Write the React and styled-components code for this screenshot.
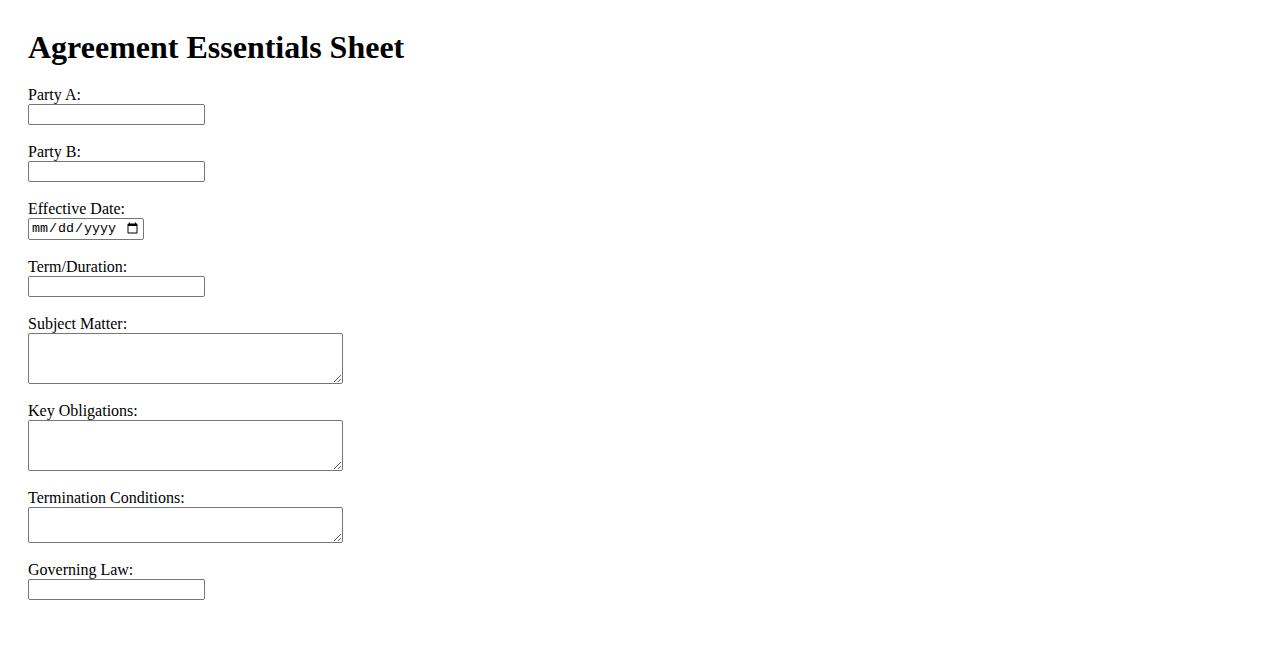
import React from "react";
import styled, { createGlobalStyle } from "styled-components";

const GlobalStyle = createGlobalStyle`
  html, body {
    background: #ffffff;
  }
  body {
    margin: 8px;
    font-family: "Liberation Serif", "Times New Roman", serif;
    font-size: 16px;
    color: #000000;
  }
`;

const Page = styled.main`
  padding: 21px 20px 20px;
`;

const Title = styled.h1`
  margin: 0 0 20px;
  font-size: 32px;
  font-weight: bold;
  line-height: normal;
`;

const Form = styled.form`
  display: flex;
  flex-direction: column;
  align-items: flex-start;
  gap: 18px;
`;

const Field = styled.div`
  display: flex;
  flex-direction: column;
  align-items: flex-start;
`;

const Label = styled.label`
  display: block;
  line-height: 18px;
  font-size: 16px;
`;

const controlBase = `
  box-sizing: border-box;
  margin: 0;
  border: 1px solid #767676;
  border-radius: 2px;
  background: #ffffff;
  color: #000000;
  font-size: 13.333px;
`;

const TextInput = styled.input`
  ${controlBase}
  width: 177px;
  height: 21px;
  padding: 1px 2px;
  font-family: "Liberation Sans", Arial, sans-serif;
`;

const DateInput = styled.input`
  ${controlBase}
  width: 116px;
  height: 22px;
  padding: 1px 2px;
  font-family: "Liberation Mono", "Courier New", monospace;
`;

const TextArea = styled.textarea`
  ${controlBase}
  width: 315px;
  height: ${(p) => (p.$rows === 2 ? 36 : 51)}px;
  padding: 2px;
  font-family: "Liberation Mono", "Courier New", monospace;
  resize: both;
`;

const fields = [
  { id: "partyA", label: "Party A:", kind: "text" },
  { id: "partyB", label: "Party B:", kind: "text" },
  { id: "effectiveDate", label: "Effective Date:", kind: "date" },
  { id: "term", label: "Term/Duration:", kind: "text" },
  { id: "subject", label: "Subject Matter:", kind: "area", rows: 3 },
  { id: "obligations", label: "Key Obligations:", kind: "area", rows: 3 },
  { id: "termination", label: "Termination Conditions:", kind: "area", rows: 2 },
  { id: "law", label: "Governing Law:", kind: "text" },
];

export default function App() {
  return (
    <>
      <GlobalStyle />
      <Page>
        <Title>Agreement Essentials Sheet</Title>
        <Form onSubmit={(e) => e.preventDefault()}>
          {fields.map((f) => (
            <Field key={f.id}>
              <Label htmlFor={f.id}>{f.label}</Label>
              {f.kind === "text" && <TextInput id={f.id} type="text" />}
              {f.kind === "date" && <DateInput id={f.id} type="date" />}
              {f.kind === "area" && <TextArea id={f.id} rows={f.rows} $rows={f.rows} />}
            </Field>
          ))}
        </Form>
      </Page>
    </>
  );
}
